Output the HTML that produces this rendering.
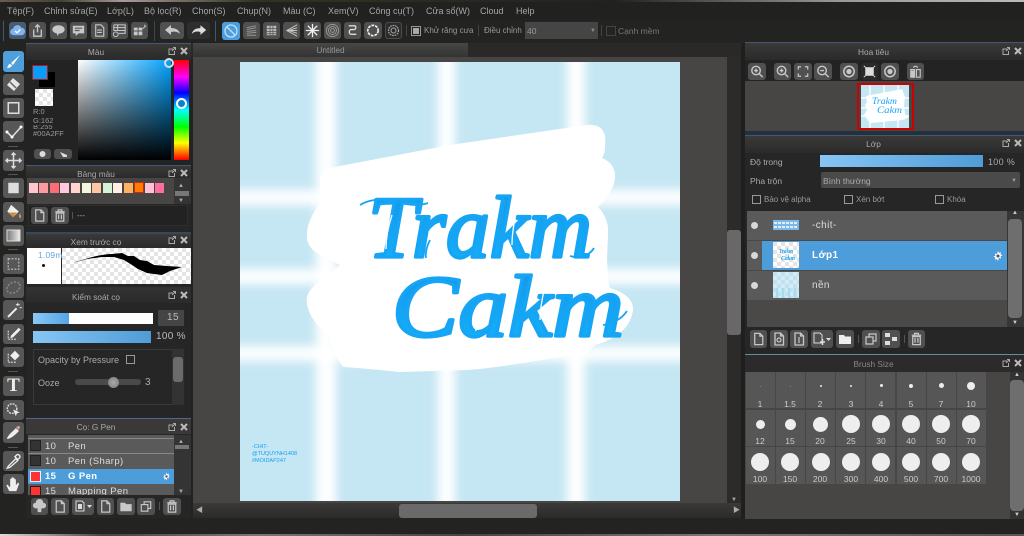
<!DOCTYPE html>
<html lang="vi"><head><meta charset="utf-8"><title>Untitled</title>
<style>
html,body{margin:0;padding:0;width:1024px;height:536px;overflow:hidden;background:#222}
body{position:relative;font-family:"Liberation Sans","Noto Sans CJK JP",sans-serif;color:#b5b5b5;font-size:9px;filter:blur(.3px)}
div,span,svg.a{position:absolute}
.t{white-space:nowrap;line-height:12px}
.m{top:5px;font-size:9px;color:#a5a5a5}
.b{background:#505050;border-radius:3px;color:#c8c8c8}
.b svg,.tb svg{position:absolute;left:0;top:0;width:100%;height:100%}
.tb{left:3px;width:21px;background:#585757;border-radius:3px;color:#ddd}
.hd{background:linear-gradient(#3a3938,#2b2a2a);border-top:1px solid #3f5a72}
.ct{text-align:center;color:#aaa;font-size:8.3px;line-height:14px;z-index:2}
.ic{width:8px;height:8px}
.sep{width:1px;background:#444}
.chk{border:1px solid #999;box-sizing:border-box;width:9px;height:9px}
.n{font-size:9.5px;color:#ddd;letter-spacing:.4px;line-height:12px;white-space:nowrap}
.sq{background:#333;width:11px;height:11px;left:30px;border:1px solid #222;box-sizing:border-box}
.c{background:#eee;border-radius:50%}
.cell{background:#565656;width:29px;height:36px}
.l{width:30px;text-align:center;color:#ccc;font-size:8.5px;line-height:10px}
</style></head><body>
<svg width="0" height="0" style="position:absolute"><defs>
<symbol id="pg" viewBox="0 0 18 18"><path d="M5 3h5.500l3 3v9H5zM10.500 3v3h3" fill="none" stroke="currentColor" stroke-width="1.300"/></symbol>
<symbol id="tr" viewBox="0 0 18 18"><path d="M4 5h10M7 4.500V3h4v1.500M5 6.500h8V15H5zM7.500 8v5M10.500 8v5" fill="none" stroke="currentColor" stroke-width="1.300"/></symbol>
<symbol id="fd" viewBox="0 0 18 18"><path d="M3 5h5l1 1.500h6V14H3z" fill="currentColor"/></symbol>
<symbol id="cp" viewBox="0 0 18 18"><path d="M4 7h7v7H4zM7 7V4h7v7h-3" fill="none" stroke="currentColor" stroke-width="1.200"/></symbol>
<symbol id="mg" viewBox="0 0 18 18"><circle cx="8" cy="8" r="4.500" fill="none" stroke="currentColor" stroke-width="1.500"/><path d="M11 11l4 4M6 8h4M8 6v4" stroke="currentColor" stroke-width="1.500"/></symbol>
<symbol id="mn" viewBox="0 0 18 18"><circle cx="8" cy="8" r="4.500" fill="none" stroke="currentColor" stroke-width="1.500"/><path d="M11 11l4 4M6 8h4" stroke="currentColor" stroke-width="1.500"/></symbol>
<symbol id="rt" viewBox="0 0 18 18"><circle cx="9" cy="9" r="5.500" fill="none" stroke="currentColor" stroke-width="1.600"/><circle cx="9" cy="9" r="2.800" fill="currentColor"/></symbol>
<symbol id="ge" viewBox="0 0 18 18"><path d="M9 2.500l1.300 2.600 2.800-1-.9 2.800 2.600 1.300-2.600 1.300.9 2.800-2.800-1L9 15.500l-1.300-2.600-2.800 1 .9-2.800L3.200 9.800l2.600-1.300-.9-2.800 2.800 1z" fill="currentColor"/><circle cx="9" cy="9" r="2" fill="#555"/></symbol>
<pattern id="ck" width="8" height="8" patternUnits="userSpaceOnUse"><rect width="8" height="8" fill="#fff"/><rect width="4" height="4" fill="#e4e4e4"/><rect x="4" y="4" width="4" height="4" fill="#e4e4e4"/></pattern>
<linearGradient id="tg" x1="0" y1="0" x2="0" y2="1"><stop offset="0" stop-color="#1592ea"/><stop offset="1" stop-color="#14b5fb"/></linearGradient>
<filter id="bl" x="-20%" y="-20%" width="140%" height="140%"><feGaussianBlur stdDeviation="5"/></filter>
</defs></svg>

<!-- top strip -->
<div style="left:0;top:0;width:1024px;height:2px;background:linear-gradient(90deg,#6a5a50,#443,#a89a98 12%,#332 25%,#222 60%,#999 82%,#bbb 100%)"></div>
<!-- menu -->
<div style="left:0;top:2px;width:1024px;height:17px;background:#212120"></div>
<div class="t m" style="left:7px">Tệp(F)</div><div class="t m" style="left:44px">Chỉnh sửa(E)</div><div class="t m" style="left:107px">Lớp(L)</div><div class="t m" style="left:144px">Bộ lọc(R)</div><div class="t m" style="left:192px">Chọn(S)</div><div class="t m" style="left:237px">Chụp(N)</div><div class="t m" style="left:283px">Màu (C)</div><div class="t m" style="left:328px">Xem(V)</div><div class="t m" style="left:369px">Công cụ(T)</div><div class="t m" style="left:426px">Cửa sổ(W)</div><div class="t m" style="left:480px">Cloud</div><div class="t m" style="left:516px">Help</div>
<!-- toolbar -->
<div style="left:0;top:19px;width:1024px;height:24px;background:#232322"></div>
<div class="sep" style="left:3px;top:21px;height:20px;background:#3c5a75"></div>
<div class="b" style="left:9px;top:22px;width:17px;height:17px;background:#4a5a70"><svg viewBox="0 0 18 18"><path d="M5 14a3.500 3.500 0 0 1-.5-7A4.500 4.500 0 0 1 13 6a4 4 0 0 1 0 8z" fill="#7fb4ee"/><path d="M6.500 9.500l2 2 3.500-3.500" fill="none" stroke="#fff" stroke-width="1.400"/></svg></div>
<div class="b" style="left:29px;top:22px;width:17px;height:17px"><svg viewBox="0 0 18 18"><path d="M5 8v7h8V8M9 11V3M6.500 5.500L9 3l2.500 2.500" fill="none" stroke="currentColor" stroke-width="1.400"/></svg></div>
<div class="b" style="left:50px;top:22px;width:17px;height:17px"><svg viewBox="0 0 18 18"><ellipse cx="9" cy="8" rx="6.500" ry="4.500" fill="currentColor"/><path d="M7 11l1 4 2-4z" fill="currentColor"/></svg></div>
<div class="b" style="left:70px;top:22px;width:17px;height:17px"><svg viewBox="0 0 18 18"><path d="M3 4h12v8H9l-3 3v-3H3z" fill="currentColor"/><path d="M5 6.500h8M5 9h5" stroke="#555" stroke-width="1.200"/></svg></div>
<div class="b" style="left:91px;top:22px;width:17px;height:17px"><svg viewBox="0 0 18 18"><path d="M5 3h5.500l3 3v9H5zM6.500 8.500h5M6.500 11h5" fill="none" stroke="currentColor" stroke-width="1.200"/></svg></div>
<div class="b" style="left:111px;top:22px;width:17px;height:17px"><svg viewBox="0 0 18 18"><path d="M3 3h12v9H8M3 3v6M3 6h12M3 9h12M7 3v6" fill="none" stroke="currentColor" stroke-width="1.100"/><circle cx="5" cy="13" r="2.500" fill="none" stroke="currentColor"/></svg></div>
<div class="b" style="left:131px;top:22px;width:17px;height:17px"><svg viewBox="0 0 18 18"><path d="M3 6h4v3H3zM8 6h4v3H8zM3 10h4v4H3zM8 10h4v4H8z" fill="currentColor"/><path d="M14 3l1.500 1.500L12.500 7" stroke="currentColor" fill="none"/></svg></div>
<div class="sep" style="left:154px;top:21px;height:20px;background:#34495c"></div>
<div class="b" style="left:160px;top:22px;width:24px;height:17px"><svg viewBox="0 0 24 17"><path d="M5 8l6-5v3c5 0 8 2 9 6-2-2-5-3-9-2v3z" fill="currentColor"/></svg></div>
<div class="b" style="left:187px;top:22px;width:23px;height:17px;background:#2e2e2e"><svg viewBox="0 0 24 17"><path d="M20 8l-6-5v3C9 6 6 8 5 12c2-2 5-3 9-2v3z" fill="#ddd"/></svg></div>
<div class="sep" style="left:215px;top:21px;height:20px;background:#3c5a75"></div>
<div class="b" style="left:222px;top:22px;width:18px;height:18px;background:#4d9ddd;color:#bfe0f7"><svg viewBox="0 0 18 18"><circle cx="9" cy="9" r="6" fill="none" stroke="currentColor" stroke-width="1.300"/><path d="M5 5l8 8" stroke="currentColor" stroke-width="1.300"/></svg></div>
<div class="b" style="left:243px;top:22px;width:17px;height:17px;color:#999"><svg viewBox="0 0 18 18"><path d="M4 6l10-2M4 8l10-2M4 10l10-1M4 12l10-1M4 14l10 0" stroke="currentColor" fill="none"/></svg></div>
<div class="b" style="left:263px;top:22px;width:17px;height:17px"><svg viewBox="0 0 18 18"><path d="M4 4h10v10H4z" fill="#bbb"/><path d="M4 7h10M4 10h10M4 12.500h10M7.500 4v10M10.500 4v10" stroke="#555" stroke-width=".8"/></svg></div>
<div class="b" style="left:283px;top:22px;width:17px;height:17px"><svg viewBox="0 0 18 18"><path d="M15 3L4 9l11 6M15 6L6 9l9 3M15 9H6" stroke="currentColor" fill="none"/></svg></div>
<div class="b" style="left:304px;top:22px;width:17px;height:17px;color:#eee"><svg viewBox="0 0 18 18"><path d="M9 2v14M2 9h14M4 4l10 10M14 4L4 14" stroke="currentColor" stroke-width="1.400" fill="none"/></svg></div>
<div class="b" style="left:324px;top:22px;width:17px;height:17px;color:#999"><svg viewBox="0 0 18 18"><circle cx="9" cy="9" r="6.500" fill="none" stroke="currentColor"/><circle cx="9" cy="9" r="4.200" fill="none" stroke="currentColor"/><circle cx="9" cy="9" r="2" fill="none" stroke="currentColor"/></svg></div>
<div class="b" style="left:344px;top:22px;width:17px;height:17px;color:#ddd"><svg viewBox="0 0 18 18"><path d="M5 4h6c2 0 2 3 0 4H7c-2 1-2 5 1 5h5" fill="none" stroke="currentColor" stroke-width="1.400"/></svg></div>
<div class="b" style="left:364px;top:22px;width:18px;height:17px;color:#eee"><svg viewBox="0 0 18 18"><circle cx="9" cy="9" r="5.500" fill="none" stroke="currentColor" stroke-width="1.800" stroke-dasharray="3 1"/></svg></div>
<div class="b" style="left:385px;top:22px;width:17px;height:17px;background:#2c2c2c;border:1px solid #4c4c4c;box-sizing:border-box;color:#aaa"><svg viewBox="0 0 18 18"><circle cx="9" cy="9" r="6" fill="none" stroke="currentColor" stroke-width="1.500" stroke-dasharray="2 1"/><circle cx="9" cy="9" r="3" fill="none" stroke="currentColor" stroke-width="1.200"/></svg></div>
<div class="sep" style="left:406px;top:25px;height:11px"></div>
<div style="left:411px;top:26px;width:10px;height:10px;border:1px solid #999;box-sizing:border-box"><div style="left:1px;top:1px;width:6px;height:6px;background:#aaa"></div></div>
<div class="t" style="left:424px;top:25px;color:#999;font-size:8px">Khử răng cưa</div>
<div class="sep" style="left:478px;top:25px;height:11px"></div>
<div class="t" style="left:484px;top:25px;color:#999;font-size:8px">Điều chỉnh</div>
<div style="left:525px;top:22px;width:73px;height:17px;background:#454545"></div>
<div class="t" style="left:527px;top:25px;color:#999;font-size:8.500px">40</div>
<div class="t" style="left:590px;top:25px;color:#888;font-size:6px">▼</div>
<div class="sep" style="left:601px;top:25px;height:11px"></div>
<div style="left:606px;top:26px;width:10px;height:10px;border:1px solid #444;box-sizing:border-box"></div>
<div class="t" style="left:618px;top:25px;color:#777;font-size:8.500px">Cạnh mềm</div>

<!-- left tools -->
<div style="left:0;top:43px;width:26px;height:475px;background:#232322"></div>
<div class="tb" style="top:51px;height:21px;background:#4f9fdc;color:#fff"><svg viewBox="0 0 21 21"><path d="M17 4L8 12l2 2zM7 13c-2 0-2 3-3 4 2 0 5-1 5-3z" fill="currentColor"/></svg></div>
<div class="tb" style="top:74px;height:21px"><svg viewBox="0 0 21 21"><path d="M10 4l7 6-6 7-7-6z" fill="#e6e6e6"/><path d="M7 8l6 6" stroke="#666" stroke-width="1.500"/></svg></div>
<div class="tb" style="top:98px;height:20px"><svg viewBox="0 0 21 21"><rect x="5" y="5" width="11" height="11" fill="none" stroke="currentColor" stroke-width="1.600"/></svg></div>
<div class="tb" style="top:121px;height:21px"><svg viewBox="0 0 21 21"><path d="M4 11l5 5 9-10" fill="none" stroke="currentColor" stroke-width="1.600"/><circle cx="4" cy="11" r="1.500" fill="#fff"/><circle cx="9" cy="16" r="1.500" fill="#fff"/><circle cx="18" cy="6" r="1.500" fill="#fff"/></svg></div>
<div class="sep" style="left:8px;top:146px;width:10px;height:1px;background:#555"></div>
<div class="tb" style="top:150px;height:21px"><svg viewBox="0 0 21 21"><path d="M10.500 3v15M3 10.500h15M8.500 5l2-2 2 2M8.500 16l2 2 2-2M5 8.500l-2 2 2 2M16 8.500l2 2-2 2" fill="none" stroke="currentColor" stroke-width="1.500"/></svg></div>
<div class="sep" style="left:8px;top:174px;width:10px;height:1px;background:#555"></div>
<div class="tb" style="top:178px;height:20px"><svg viewBox="0 0 21 21"><rect x="5" y="5" width="11" height="11" fill="#ddd"/></svg></div>
<div class="tb" style="top:202px;height:20px"><svg viewBox="0 0 21 21"><path d="M8 3l8 7-6 6-6-6z" fill="#eee"/><path d="M17 12c1 2 2 3 1 5-2 0-2-3-1-5z" fill="#e89a3a"/><path d="M5 11h9l-4 5z" fill="#d28a3a"/></svg></div>
<div class="tb" style="top:225px;height:21px"><svg viewBox="0 0 21 21"><defs><linearGradient id="gg" x1="0" x2="1"><stop offset="0" stop-color="#777"/><stop offset="1" stop-color="#eee"/></linearGradient></defs><rect x="4" y="5" width="13" height="11" fill="url(#gg)" stroke="#ddd"/></svg></div>
<div class="sep" style="left:8px;top:249px;width:10px;height:1px;background:#555"></div>
<div class="tb" style="top:254px;height:20px;color:#aaa"><svg viewBox="0 0 21 21"><rect x="5" y="5" width="11" height="11" fill="none" stroke="currentColor" stroke-width="1.500" stroke-dasharray="2 1.500"/></svg></div>
<div class="tb" style="top:277px;height:21px;color:#888"><svg viewBox="0 0 21 21"><ellipse cx="10.500" cy="10.500" rx="7" ry="5" transform="rotate(-30 10.500 10.500)" fill="none" stroke="currentColor" stroke-width="1.500" stroke-dasharray="2 1.500"/></svg></div>
<div class="tb" style="top:300px;height:20px"><svg viewBox="0 0 21 21"><path d="M4 17L13 8l1.500 1.500-9 9z" fill="#eee"/><path d="M15 3v3M13 5h4M17 8h2" stroke="#eee"/></svg></div>
<div class="tb" style="top:324px;height:20px"><svg viewBox="0 0 21 21"><path d="M5 7v9h9" fill="none" stroke="#ccc" stroke-dasharray="2 1" stroke-width="1.300"/><path d="M16 4l2 2-8 8-3 1 1-3z" fill="#eee"/></svg></div>
<div class="tb" style="top:347px;height:20px"><svg viewBox="0 0 21 21"><path d="M5 7v9h9" fill="none" stroke="#ccc" stroke-dasharray="2 1" stroke-width="1.300"/><path d="M12 4l5 5-5 5-5-5z" fill="#eee"/></svg></div>
<div class="sep" style="left:8px;top:371px;width:10px;height:1px;background:#555"></div>
<div class="tb" style="top:376px;height:20px;color:#eee;font:bold 19px/20px 'Liberation Serif',serif;text-align:center">T</div>
<div class="tb" style="top:400px;height:20px"><svg viewBox="0 0 21 21"><circle cx="9" cy="9" r="5" fill="none" stroke="#ddd" stroke-width="1.500" stroke-dasharray="2 1"/><path d="M10 10l7 3-3 1-1 3z" fill="#eee"/></svg></div>
<div class="tb" style="top:422px;height:21px"><svg viewBox="0 0 21 21"><path d="M4 17c0-3 6-8 9-11l3 3c-3 3-8 8-12 8z" fill="#eee"/><path d="M13 5l3-1 1 1-1 3z" fill="#e9a0a0"/></svg></div>
<div class="sep" style="left:8px;top:447px;width:10px;height:1px;background:#555"></div>
<div class="tb" style="top:451px;height:20px"><svg viewBox="0 0 21 21"><path d="M5 16l8-8 2 2-8 7-3 1zM12 6l2-2c2-1 4 1 3 3l-2 2z" fill="none" stroke="#eee" stroke-width="1.400"/></svg></div>
<div class="tb" style="top:474px;height:20px"><svg viewBox="0 0 21 21"><path d="M6 18l-3-6 1-1 3 3V5h1.500v6V3.500H10V11V4h1.500v7V5.500H13V12l2-3 1.500 1-3 8z" fill="#eee"/></svg></div>

<!-- Colour panel -->
<div style="left:26px;top:42px;width:165px;height:476px;background:#262626"></div>
<div class="hd" style="left:26px;top:43px;width:165px;height:16px"></div>
<div class="ct" style="left:26px;top:45px;width:140px">Màu</div>
<svg class="a ic" style="left:168px;top:47px" viewBox="0 0 8 8"><path d="M5 2H1v5.500h5.500V4M4 4l3.500-3.500M5 .5h2.500V3" fill="none" stroke="#aaa"/></svg>
<svg class="a ic" style="left:180px;top:47px" viewBox="0 0 8 8"><path d="M1 1l6 6M7 1L1 7" stroke="#bbb" stroke-width="2"/></svg>
<div style="left:26px;top:60px;width:165px;height:105px;background:#232323"></div>
<div style="left:39px;top:72px;width:16px;height:15px;background:#000"></div>
<div style="left:32px;top:65px;width:14px;height:13px;background:#0a9cf6;border:1px solid #b01818"></div>
<svg class="a" style="left:35px;top:89px" width="18" height="17"><rect width="18" height="17" fill="url(#ck)"/></svg>
<div class="t" style="left:33px;top:107px;font-size:7.500px;line-height:9px;color:#999">R:0<br>G:162</div>
<div style="left:33px;top:125px;width:30px;height:5px;overflow:hidden"><div class="t" style="left:0;top:-3px;font-size:7.500px;line-height:9px;color:#999">B:255</div></div>
<div class="t" style="left:33px;top:129px;font-size:7.500px;line-height:9px;color:#999">#00A2FF</div>
<div class="b" style="left:34px;top:149px;width:17px;height:10px"><svg viewBox="0 0 17 10"><circle cx="8.500" cy="5" r="3" fill="#ddd"/></svg></div>
<div class="b" style="left:54px;top:149px;width:18px;height:10px"><svg viewBox="0 0 18 10"><path d="M6 3l7 3v2H9z" fill="#ddd"/></svg></div>
<div style="left:78px;top:60px;width:93px;height:100px;background:linear-gradient(#0000,#000),linear-gradient(90deg,#fff,#00a2ff)"></div>
<div style="left:164px;top:58px;width:6px;height:6px;border:2px solid #ddd;border-radius:50%"></div>
<div style="left:174px;top:60px;width:15px;height:100px;background:linear-gradient(#f00 0%,#f0f 17%,#00f 33%,#0ff 50%,#0f0 67%,#ff0 83%,#f00 100%)"></div>
<div style="left:176px;top:98px;width:7px;height:7px;border:2px solid #fff;border-radius:50%;background:#0a80c8"></div>

<!-- Palette -->
<div class="hd" style="left:26px;top:165px;width:165px;height:12px"></div>
<div class="ct" style="left:26px;top:167px;width:140px">Bảng màu</div>
<svg class="a ic" style="left:168px;top:169px" viewBox="0 0 8 8"><path d="M5 2H1v5.500h5.500V4M4 4l3.500-3.500M5 .5h2.500V3" fill="none" stroke="#aaa"/></svg>
<svg class="a ic" style="left:180px;top:169px" viewBox="0 0 8 8"><path d="M1 1l6 6M7 1L1 7" stroke="#bbb" stroke-width="2"/></svg>
<div style="left:27px;top:178px;width:147px;height:26px;background:#474645"></div>
<div style="left:174px;top:178px;width:17px;height:26px;background:#343434"></div>
<div style="left:29px;top:183px;width:9px;height:10px;background:#ffc6cf"></div><div style="left:39px;top:183px;width:9px;height:10px;background:#ff9aa0"></div><div style="left:50px;top:183px;width:9px;height:10px;background:#ff6c75"></div><div style="left:60px;top:183px;width:9px;height:10px;background:#ffc8dd"></div><div style="left:71px;top:183px;width:9px;height:10px;background:#ffd5d0"></div><div style="left:82px;top:183px;width:9px;height:10px;background:#f3f7dd"></div><div style="left:92px;top:183px;width:9px;height:10px;background:#ffc6a5"></div><div style="left:103px;top:183px;width:9px;height:10px;background:#d5f3d6"></div><div style="left:113px;top:183px;width:9px;height:10px;background:#ffeee6"></div><div style="left:124px;top:183px;width:9px;height:10px;background:#ffb060"></div><div style="left:134px;top:182px;width:8px;height:9px;background:#ff7a00;border:1px solid #c23010"></div><div style="left:145px;top:183px;width:9px;height:10px;background:#ffc0d8"></div><div style="left:155px;top:183px;width:9px;height:10px;background:#ff6f9e"></div>
<div class="t" style="left:178px;top:180px;font-size:6px;color:#aaa">▲</div>
<div style="left:175px;top:191px;width:14px;height:5px;background:#777"></div>
<div class="t" style="left:178px;top:195px;font-size:6px;color:#aaa">▼</div>
<div style="left:28px;top:205px;width:160px;height:21px;background:#222;border:1px solid #2e2e2e;box-sizing:border-box"></div>
<div class="b" style="left:31px;top:207px;width:17px;height:17px"><svg viewBox="0 0 18 18"><use href="#pg"/></svg></div>
<div class="b" style="left:51px;top:207px;width:18px;height:17px"><svg viewBox="0 0 18 18"><use href="#tr"/></svg></div>
<div class="sep" style="left:72px;top:212px;height:7px;background:#555"></div>
<div class="t" style="left:77px;top:210px;color:#aaa;font-size:8px">---</div>

<!-- Brush preview -->
<div style="left:26px;top:232px;width:165px;height:2px;background:#34495c"></div>
<div class="hd" style="left:26px;top:234px;width:165px;height:14px;border-top:0"></div>
<div class="ct" style="left:26px;top:235px;width:140px">Xem trước cọ</div>
<svg class="a ic" style="left:168px;top:236px" viewBox="0 0 8 8"><path d="M5 2H1v5.500h5.500V4M4 4l3.500-3.500M5 .5h2.500V3" fill="none" stroke="#aaa"/></svg>
<svg class="a ic" style="left:180px;top:236px" viewBox="0 0 8 8"><path d="M1 1l6 6M7 1L1 7" stroke="#bbb" stroke-width="2"/></svg>
<div style="left:27px;top:248px;width:34px;height:36px;background:#fff;overflow:hidden"></div>
<div class="t" style="left:38px;top:249px;font-size:8.500px;color:#6aa5d8;letter-spacing:.2px">1.09m</div>
<div style="left:42px;top:264px;width:3px;height:3px;background:#111;border-radius:50%"></div>
<svg class="a" style="left:62px;top:248px" width="129" height="36"><rect width="129" height="36" fill="url(#ck)"/><path d="M11 15C25 10 40 6 50 6L60 5 66 8 72 8 78 12 85 13 92 17 105 18 120 19 108 23 100 27 92 26 85 25 76 21 70 17 62 12 52 9 40 9 25 11z" fill="#000"/></svg>

<!-- Brush control -->
<div class="hd" style="left:26px;top:287px;width:165px;height:16px;background:linear-gradient(#333,#2b2a2a);border-top:0"></div>
<div class="ct" style="left:26px;top:290px;width:140px">Kiểm soát cọ</div>
<svg class="a ic" style="left:168px;top:291px" viewBox="0 0 8 8"><path d="M5 2H1v5.500h5.500V4M4 4l3.500-3.500M5 .5h2.500V3" fill="none" stroke="#aaa"/></svg>
<svg class="a ic" style="left:180px;top:291px" viewBox="0 0 8 8"><path d="M1 1l6 6M7 1L1 7" stroke="#bbb" stroke-width="2"/></svg>
<div style="left:33px;top:313px;width:120px;height:11px;background:#fff"></div>
<div style="left:33px;top:313px;width:36px;height:11px;background:linear-gradient(90deg,#8ac8f5,#55a5e5)"></div>
<div style="left:158px;top:310px;width:26px;height:16px;background:#454545"></div>
<div class="t" style="left:167px;top:312px;font-size:10px;color:#bbb;letter-spacing:.5px">15</div>
<div style="left:33px;top:331px;width:118px;height:12px;background:linear-gradient(90deg,#86c6f4,#4f9cd8)"></div>
<div class="t" style="left:156px;top:331px;font-size:10px;color:#bbb;letter-spacing:.3px">100 %</div>
<div style="left:33px;top:349px;width:151px;height:56px;border:1px solid #3a3a3a;box-sizing:border-box"></div>
<div class="t" style="left:38px;top:354px;font-size:9px;color:#aaa">Opacity by Pressure</div>
<div class="chk" style="left:126px;top:355px"></div>
<div class="t" style="left:38px;top:377px;font-size:9px;color:#aaa">Ooze</div>
<div style="left:75px;top:379px;width:66px;height:6px;background:#4a4a4a;border-radius:3px"></div>
<div style="left:108px;top:377px;width:11px;height:11px;background:radial-gradient(#aaa,#777);border-radius:50%"></div>
<div class="t" style="left:145px;top:377px;font-size:10px;color:#aaa">3</div>
<div style="left:172px;top:349px;width:12px;height:56px;background:#333"></div>
<div style="left:173px;top:357px;width:10px;height:25px;background:#6b6b6b;border-radius:3px"></div>

<!-- Brush list -->
<div style="left:26px;top:418px;width:165px;height:1px;background:#4a6b8a"></div>
<div style="left:26px;top:419px;width:165px;height:15px;background:#3a3938"></div>
<div class="ct" style="left:26px;top:420px;width:140px">Cọ: G Pen</div>
<svg class="a ic" style="left:168px;top:423px" viewBox="0 0 8 8"><path d="M5 2H1v5.500h5.500V4M4 4l3.500-3.500M5 .5h2.500V3" fill="none" stroke="#aaa"/></svg>
<svg class="a ic" style="left:180px;top:423px" viewBox="0 0 8 8"><path d="M1 1l6 6M7 1L1 7" stroke="#bbb" stroke-width="2"/></svg>
<div style="left:28px;top:435px;width:146px;height:60px;background:#5a5a5a;overflow:hidden">
<div style="left:0;top:3px;width:146px;height:1px;background:#888"></div>
<div style="left:0;top:18px;width:146px;height:1px;background:#888"></div>
<div style="left:0;top:34px;width:146px;height:15px;background:#4d9ddb"></div>
<div class="sq" style="left:2px;top:5px"></div><div class="sq" style="left:2px;top:20px"></div>
<div class="sq" style="left:2px;top:36px;background:#f33;border-color:#eee"></div><div class="sq" style="left:2px;top:51px;background:#f33"></div>
<div class="n" style="left:17px;top:6px">10</div><div class="n" style="left:40px;top:6px">Pen</div>
<div class="n" style="left:17px;top:21px">10</div><div class="n" style="left:40px;top:21px">Pen (Sharp)</div>
<div class="n" style="left:17px;top:36px;color:#fff;font-weight:bold">15</div><div class="n" style="left:40px;top:36px;color:#fff;font-weight:bold">G Pen</div>
<div class="n" style="left:17px;top:51px">15</div><div class="n" style="left:40px;top:51px">Mapping Pen</div>
<svg class="a" style="left:133px;top:36px;color:#fff" width="11" height="11" viewBox="0 0 18 18"><use href="#ge"/></svg>
</div>
<div style="left:174px;top:435px;width:17px;height:60px;background:#343434"></div>
<div class="t" style="left:178px;top:436px;font-size:6px;color:#aaa">▲</div>
<div style="left:175px;top:445px;width:14px;height:4px;background:#777"></div>
<div class="t" style="left:178px;top:486px;font-size:6px;color:#aaa">▼</div>
<div class="b" style="left:31px;top:498px;width:17px;height:17px"><svg viewBox="0 0 18 18"><path d="M5 11a3 3 0 0 1 0-6 4 4 0 0 1 8 0 3 3 0 0 1 0 6zM7 11h4v4H7z" fill="currentColor"/></svg></div>
<div class="b" style="left:51px;top:498px;width:18px;height:17px"><svg viewBox="0 0 18 18"><use href="#pg"/></svg></div>
<div class="b" style="left:72px;top:498px;width:22px;height:17px"><svg viewBox="0 0 22 17"><path d="M4 3h6l2 2v8H4z" fill="none" stroke="#ddd"/><path d="M6 6h4v5H6z" fill="#ddd"/><path d="M15 7h5l-2.500 3z" fill="#ddd"/></svg></div>
<div class="b" style="left:97px;top:498px;width:17px;height:17px"><svg viewBox="0 0 18 18"><use href="#pg"/></svg></div>
<div class="b" style="left:117px;top:498px;width:18px;height:17px"><svg viewBox="0 0 18 18"><use href="#fd"/></svg></div>
<div class="b" style="left:137px;top:498px;width:18px;height:17px"><svg viewBox="0 0 18 18"><use href="#cp"/></svg></div>
<div class="sep" style="left:159px;top:502px;height:8px;background:#555"></div>
<div class="b" style="left:163px;top:498px;width:18px;height:17px"><svg viewBox="0 0 18 18"><use href="#tr"/></svg></div>

<!-- Canvas area -->
<div style="left:191px;top:43px;width:550px;height:14px;background:#2a2928"></div>
<div style="left:193px;top:43px;width:275px;height:14px;background:linear-gradient(#484746,#333)"></div>
<div class="ct" style="left:193px;top:43px;width:275px;color:#999">Untitled</div>
<div style="left:193px;top:57px;width:534px;height:446px;background:#474645"></div>
<div style="left:727px;top:57px;width:14px;height:446px;background:#2c2b2a"></div>
<div style="left:727px;top:230px;width:14px;height:105px;background:#686868;border-radius:3px"></div>
<div class="t" style="left:731px;top:494px;font-size:6px;color:#aaa">▼</div>
<div style="left:193px;top:503px;width:548px;height:16px;background:linear-gradient(#3a3938,#2a2928)"></div>
<div class="t" style="left:196px;top:505px;font-size:7px;color:#aaa">◀</div>
<div class="t" style="left:733px;top:505px;font-size:7px;color:#aaa">▶</div>
<div style="left:399px;top:504px;width:138px;height:14px;background:#6a6a6a;border-radius:3px"></div>

<svg class="a" style="left:240px;top:62px" width="440" height="439" viewBox="240 62 440 439">
<rect x="240" y="62" width="440" height="439" fill="#c5e6f3"/>
<g filter="url(#bl)" fill="#fff"><rect x="316" y="40" width="20" height="480"/><rect x="438" y="40" width="17" height="480"/><rect x="567" y="40" width="18" height="480"/>
<rect x="220" y="190" width="480" height="15"/><rect x="220" y="269" width="480" height="15"/><rect x="220" y="346" width="480" height="15"/></g>
<path d="M320 180C322 170 330 168 345 165L450 145 587 125C600 124 607 130 605 145 605 152 604 155 602 158 612 162 616 170 615 178 614 190 605 200 598 207 606 215 609 225 608 235L607 260C608 275 608 283 610 288 622 292 634 298 633 310 631 325 620 338 595 345L587 353C550 358 500 368 467 370L400 372C380 370 360 368 343 367 335 355 330 340 327 333 315 325 305 310 307 297 310 285 325 280 340 265 320 255 305 250 307 233 308 222 312 215 320 203z" fill="#fff"/>
<g font-family="Liberation Serif,serif" font-style="italic" fill="url(#tg)" stroke="#16a4f5" stroke-width="3.200" stroke-linejoin="round">
<text x="368" y="257" font-size="88" textLength="224" lengthAdjust="spacingAndGlyphs">Trakm</text>
<text x="392" y="336" font-size="88" textLength="232" lengthAdjust="spacingAndGlyphs">Cakm</text>
</g>
<path d="M360 205c8-5 20-7 32-4 12 3 24 6 36 2M603 325c8-1 18-5 24-14M570 256c6 2 18 2 24-8M430 240c-3 6-5 12-4 18M505 200c-3 15-5 30-4 50" fill="none" stroke="#16a4f5" stroke-width="1.800"/>
<path d="M392 215c-4 12-6 24-6 34M518 205c-3 12-6 26-6 40M445 238c-3 6-4 12-3 16M420 292c-4 12-5 24-3 34M546 282c-3 12-6 26-6 38M478 318c-2 5-3 9-2 13" fill="none" stroke="#fff" stroke-width="1.300"/>
<g font-family="Liberation Sans,sans-serif" font-size="5.500" fill="#1a9ff0"><text x="252" y="448">-CHIT-</text><text x="252" y="455">@TUQUYNH1408</text><text x="252" y="462">#MOIDAP247</text></g>
</svg>

<!-- bottom -->
<div style="left:0;top:518px;width:1024px;height:16px;background:#232322"></div>
<div style="left:0;top:534px;width:1024px;height:2px;background:linear-gradient(90deg,#ddd,#444 10%,#777 25%,#444 45%,#777 70%,#555)"></div>

<!-- Right panels -->
<div style="left:741px;top:19px;width:283px;height:23px;background:#232322"></div>
<div style="left:741px;top:42px;width:283px;height:476px;background:#262626"></div>
<div style="left:741px;top:43px;width:4px;height:475px;background:#1f1f1f"></div>
<div class="hd" style="left:745px;top:42px;width:279px;height:17px"></div>
<div class="ct" style="left:745px;top:45px;width:257px">Hoa tiêu</div>
<svg class="a ic" style="left:1002px;top:47px" viewBox="0 0 8 8"><path d="M5 2H1v5.500h5.500V4M4 4l3.500-3.500M5 .5h2.500V3" fill="none" stroke="#aaa"/></svg>
<svg class="a ic" style="left:1014px;top:47px" viewBox="0 0 8 8"><path d="M1 1l6 6M7 1L1 7" stroke="#bbb" stroke-width="2"/></svg>
<div style="left:745px;top:60px;width:279px;height:21px;background:#232323"></div>
<div class="b" style="left:748px;top:63px;width:18px;height:17px"><svg viewBox="0 0 18 18"><use href="#mg"/></svg></div>
<div class="b" style="left:774px;top:63px;width:17px;height:17px"><svg viewBox="0 0 18 18"><use href="#mg"/></svg></div>
<div class="b" style="left:794px;top:63px;width:18px;height:17px"><svg viewBox="0 0 18 18"><path d="M4 7V4h3M11 4h3v3M14 11v3h-3M7 14H4v-3" fill="none" stroke="currentColor" stroke-width="1.300"/></svg></div>
<div class="b" style="left:814px;top:63px;width:18px;height:17px"><svg viewBox="0 0 18 18"><use href="#mn"/></svg></div>
<div class="b" style="left:840px;top:63px;width:18px;height:17px"><svg viewBox="0 0 18 18"><use href="#rt"/></svg></div>
<div class="b" style="left:861px;top:63px;width:17px;height:17px;background:#2a2a2a"><svg viewBox="0 0 18 18"><path d="M5 5h8v8H5zM3 3l3 3M15 3l-3 3M3 15l3-3M15 15l-3-3" fill="#ddd" stroke="#ddd"/></svg></div>
<div class="b" style="left:881px;top:63px;width:18px;height:17px"><svg viewBox="0 0 18 18"><use href="#rt"/></svg></div>
<div class="b" style="left:907px;top:63px;width:17px;height:17px"><svg viewBox="0 0 18 18"><path d="M4 7h4v8H4zM10 7h4v8h-4zM7 5c0-2 4-2 4 0" fill="none" stroke="currentColor" stroke-width="1.200"/><path d="M4 8h4v7H4z" fill="currentColor"/></svg></div>
<div style="left:745px;top:81px;width:279px;height:50px;background:#474645"></div>
<svg class="a" style="left:857px;top:83px" width="57" height="47" viewBox="0 0 57 47">
<rect width="57" height="47" fill="#c00"/><rect x="2" y="2" width="53" height="43" fill="#474645"/><rect x="4" y="2" width="48" height="43" fill="#c5e6f3"/>
<path d="M13 2v43M27 2v43M41 2v43M4 15h48M4 25h48M4 33h48" stroke="#fff" stroke-width="2" opacity=".7"/>
<path d="M9 13l36-7 3 8-1 8 1 9 4 3-6 3-33 3-6-8 3-5-2-5 2-3z" fill="#fff"/>
<g font-family="Liberation Serif,serif" font-style="italic" font-size="9" fill="#1aa5f5"><text x="15" y="21" textLength="25" lengthAdjust="spacingAndGlyphs">Trakm</text><text x="20" y="30" textLength="25" lengthAdjust="spacingAndGlyphs">Cakm</text></g>
</svg>
<div style="left:745px;top:131px;width:279px;height:4px;background:#24313c"></div>
<div class="hd" style="left:745px;top:135px;width:279px;height:17px"></div>
<div class="ct" style="left:745px;top:137px;width:257px">Lớp</div>
<svg class="a ic" style="left:1002px;top:139px" viewBox="0 0 8 8"><path d="M5 2H1v5.500h5.500V4M4 4l3.500-3.500M5 .5h2.500V3" fill="none" stroke="#aaa"/></svg>
<svg class="a ic" style="left:1014px;top:139px" viewBox="0 0 8 8"><path d="M1 1l6 6M7 1L1 7" stroke="#bbb" stroke-width="2"/></svg>
<div class="t" style="left:750px;top:156px;color:#aaa;font-size:8.500px">Độ trong</div>
<div style="left:820px;top:155px;width:163px;height:12px;background:linear-gradient(90deg,#86c6f4,#4f9cd8)"></div>
<div class="t" style="left:988px;top:156px;color:#aaa;font-size:9px;letter-spacing:.3px">100 %</div>
<div class="t" style="left:750px;top:175px;color:#aaa;font-size:8.500px">Pha trộn</div>
<div style="left:821px;top:172px;width:199px;height:16px;background:#4a4a4a;border-radius:2px"></div>
<div class="t" style="left:823px;top:175px;color:#aaa;font-size:8.500px">Bình thường</div>
<div class="t" style="left:1011px;top:175px;color:#999;font-size:6px">▼</div>
<div class="chk" style="left:752px;top:195px"></div><div class="t" style="left:764px;top:194px;color:#999;font-size:8px">Bảo vệ alpha</div>
<div class="chk" style="left:844px;top:195px"></div><div class="t" style="left:856px;top:194px;color:#999;font-size:8px">Xén bớt</div>
<div class="chk" style="left:935px;top:195px"></div><div class="t" style="left:947px;top:194px;color:#999;font-size:8px">Khóa</div>
<div style="left:747px;top:211px;width:260px;height:116px;background:#4a4948"></div>
<div style="left:747px;top:211px;width:260px;height:29px;background:#5a5a5a"></div>
<div style="left:747px;top:241px;width:260px;height:29px;background:#5a5a5a"></div>
<div style="left:762px;top:241px;width:245px;height:29px;background:#4d9ddb"></div>
<div style="left:747px;top:271px;width:260px;height:29px;background:#5a5a5a"></div>
<div style="left:751px;top:222px;width:7px;height:7px;border-radius:50%;background:#d8d8d8"></div>
<div style="left:751px;top:252px;width:7px;height:7px;border-radius:50%;background:#d8d8d8"></div>
<div style="left:751px;top:282px;width:7px;height:7px;border-radius:50%;background:#d8d8d8"></div>
<svg class="a" style="left:773px;top:220px" width="26" height="10"><rect width="26" height="10" fill="#7ab8ea"/><path d="M1 3h24M1 7h24" stroke="#fff" stroke-dasharray="3 1" stroke-width="1.600"/></svg>
<svg class="a" style="left:773px;top:242px" width="26" height="26" viewBox="0 0 26 26"><rect width="26" height="26" fill="url(#ck)"/><g font-family="Liberation Serif,serif" font-style="italic" font-weight="700" font-size="6" fill="#1aa5f5"><text x="6" y="11" textLength="14" lengthAdjust="spacingAndGlyphs">Trakm</text><text x="8" y="18" textLength="14" lengthAdjust="spacingAndGlyphs">Cakm</text></g></svg>
<svg class="a" style="left:773px;top:272px" width="26" height="26" viewBox="0 0 26 26"><rect width="26" height="26" fill="url(#ck)"/><rect width="26" height="26" fill="#a9dcf2" opacity=".55"/><path d="M4 16v10M10 16v10M16 16v10M22 16v10" stroke="#a5daf0" stroke-width="2.500"/></svg>
<div class="n" style="left:812px;top:220px;font-size:10px;color:#ddd">-chit-</div>
<div class="n" style="left:812px;top:250px;font-size:10px;color:#fff;font-weight:bold">Lớp1</div>
<div class="n" style="left:812px;top:280px;font-size:10px;color:#ddd">nền</div>
<svg class="a" style="left:991px;top:249px;color:#fff" width="14" height="14" viewBox="0 0 18 18"><use href="#ge"/></svg>
<div style="left:1007px;top:211px;width:17px;height:116px;background:#363636"></div>
<div class="t" style="left:1012px;top:207px;font-size:6px;color:#ccc;line-height:12px">▲</div>
<div style="left:1008px;top:219px;width:14px;height:99px;background:#6e6e6e;border-radius:4px"></div>
<div class="t" style="left:1012px;top:317px;font-size:6px;color:#ccc">▼</div>
<div class="b" style="left:750px;top:330px;width:17px;height:18px"><svg viewBox="0 0 18 18"><use href="#pg"/></svg></div>
<div class="b" style="left:770px;top:330px;width:18px;height:18px"><svg viewBox="0 0 18 18"><use href="#pg"/><circle cx="9" cy="10" r="2" fill="none" stroke="#ddd"/></svg></div>
<div class="b" style="left:790px;top:330px;width:18px;height:18px"><svg viewBox="0 0 18 18"><use href="#pg"/><path d="M9 7v6" stroke="#ddd"/></svg></div>
<div class="b" style="left:811px;top:330px;width:22px;height:18px"><svg viewBox="0 0 22 18"><path d="M3 3h6l2 2v8H3z" fill="none" stroke="#ddd"/><path d="M9 12h5M11.500 9v6" stroke="#ddd" stroke-width="1.500"/><path d="M15 8h5l-2.500 3z" fill="#ddd"/></svg></div>
<div class="b" style="left:836px;top:330px;width:18px;height:18px;color:#eee"><svg viewBox="0 0 18 18"><use href="#fd"/></svg></div>
<div class="sep" style="left:858px;top:335px;height:8px;background:#555"></div>
<div class="b" style="left:862px;top:330px;width:18px;height:18px"><svg viewBox="0 0 18 18"><use href="#cp"/></svg></div>
<div class="b" style="left:882px;top:330px;width:18px;height:18px"><svg viewBox="0 0 18 18"><path d="M3 3h5v4H3zM3 11h5v4H3zM10 7h5v4h-5z" fill="#ddd"/></svg></div>
<div class="sep" style="left:904px;top:335px;height:8px;background:#555"></div>
<div class="b" style="left:908px;top:330px;width:17px;height:18px"><svg viewBox="0 0 18 18"><use href="#tr"/></svg></div>
<div style="left:745px;top:354px;width:279px;height:1px;background:#5e8fa0"></div>
<div style="left:745px;top:355px;width:279px;height:17px;background:#2c2a2a"></div>
<div class="ct" style="left:745px;top:357px;width:257px;color:#888">Brush Size</div>
<svg class="a ic" style="left:1002px;top:359px" viewBox="0 0 8 8"><path d="M5 2H1v5.500h5.500V4M4 4l3.500-3.500M5 .5h2.500V3" fill="none" stroke="#aaa"/></svg>
<svg class="a ic" style="left:1014px;top:359px" viewBox="0 0 8 8"><path d="M1 1l6 6M7 1L1 7" stroke="#bbb" stroke-width="2"/></svg>
<div style="left:745px;top:372px;width:265px;height:147px;background:#474645"></div>
<div style="left:1010px;top:372px;width:14px;height:147px;background:#333"></div>
<div class="t" style="left:1014px;top:369px;font-size:6px;color:#ccc">▲</div>
<div style="left:1010px;top:380px;width:14px;height:131px;background:#6e6e6e;border-radius:4px"></div>
<div class="t" style="left:1014px;top:509px;font-size:6px;color:#ccc">▼</div>
<!-- brush size cells -->
<div class="cell" style="left:746px;top:372px"></div><div class="cell" style="left:776px;top:372px"></div><div class="cell" style="left:806px;top:372px"></div><div class="cell" style="left:836px;top:372px"></div><div class="cell" style="left:866px;top:372px"></div><div class="cell" style="left:897px;top:372px"></div><div class="cell" style="left:927px;top:372px"></div><div class="cell" style="left:957px;top:372px"></div>
<div class="cell" style="left:746px;top:410px"></div><div class="cell" style="left:776px;top:410px"></div><div class="cell" style="left:806px;top:410px"></div><div class="cell" style="left:836px;top:410px"></div><div class="cell" style="left:866px;top:410px"></div><div class="cell" style="left:897px;top:410px"></div><div class="cell" style="left:927px;top:410px"></div><div class="cell" style="left:957px;top:410px"></div>
<div class="cell" style="left:746px;top:447px;height:37px"></div><div class="cell" style="left:776px;top:447px;height:37px"></div><div class="cell" style="left:806px;top:447px;height:37px"></div><div class="cell" style="left:836px;top:447px;height:37px"></div><div class="cell" style="left:866px;top:447px;height:37px"></div><div class="cell" style="left:897px;top:447px;height:37px"></div><div class="cell" style="left:927px;top:447px;height:37px"></div><div class="cell" style="left:957px;top:447px;height:37px"></div>
<div class="c" style="left:760px;top:386px;width:1px;height:1px;background:#888"></div><div class="c" style="left:790px;top:386px;width:1px;height:1px;background:#999"></div><div class="c" style="left:820px;top:385px;width:2px;height:2px"></div><div class="c" style="left:850px;top:385px;width:2px;height:2px"></div><div class="c" style="left:880px;top:384px;width:3px;height:3px"></div><div class="c" style="left:909px;top:384px;width:4px;height:4px"></div><div class="c" style="left:939px;top:383px;width:5px;height:5px"></div><div class="c" style="left:967px;top:382px;width:8px;height:8px"></div>
<div class="c" style="left:756px;top:420px;width:9px;height:9px"></div><div class="c" style="left:785px;top:419px;width:11px;height:11px"></div><div class="c" style="left:813px;top:417px;width:15px;height:15px"></div><div class="c" style="left:842px;top:415px;width:18px;height:18px"></div><div class="c" style="left:872px;top:415px;width:18px;height:18px"></div><div class="c" style="left:902px;top:415px;width:18px;height:18px"></div><div class="c" style="left:932px;top:415px;width:18px;height:18px"></div><div class="c" style="left:962px;top:415px;width:18px;height:18px"></div>
<div class="c" style="left:751px;top:453px;width:18px;height:18px"></div><div class="c" style="left:781px;top:453px;width:18px;height:18px"></div><div class="c" style="left:812px;top:453px;width:18px;height:18px"></div><div class="c" style="left:842px;top:453px;width:18px;height:18px"></div><div class="c" style="left:872px;top:453px;width:18px;height:18px"></div><div class="c" style="left:902px;top:453px;width:18px;height:18px"></div><div class="c" style="left:932px;top:453px;width:18px;height:18px"></div><div class="c" style="left:962px;top:453px;width:18px;height:18px"></div>
<div class="l" style="left:745px;top:399px">1</div><div class="l" style="left:775px;top:399px">1.5</div><div class="l" style="left:805px;top:399px">2</div><div class="l" style="left:836px;top:399px">3</div><div class="l" style="left:866px;top:399px">4</div><div class="l" style="left:896px;top:399px">5</div><div class="l" style="left:926px;top:399px">7</div><div class="l" style="left:956px;top:399px">10</div>
<div class="l" style="left:745px;top:436px">12</div><div class="l" style="left:775px;top:436px">15</div><div class="l" style="left:805px;top:436px">20</div><div class="l" style="left:836px;top:436px">25</div><div class="l" style="left:866px;top:436px">30</div><div class="l" style="left:896px;top:436px">40</div><div class="l" style="left:926px;top:436px">50</div><div class="l" style="left:956px;top:436px">70</div>
<div class="l" style="left:745px;top:474px">100</div><div class="l" style="left:775px;top:474px">150</div><div class="l" style="left:805px;top:474px">200</div><div class="l" style="left:836px;top:474px">300</div><div class="l" style="left:866px;top:474px">400</div><div class="l" style="left:896px;top:474px">500</div><div class="l" style="left:926px;top:474px">700</div><div class="l" style="left:956px;top:474px">1000</div>
</body></html>
